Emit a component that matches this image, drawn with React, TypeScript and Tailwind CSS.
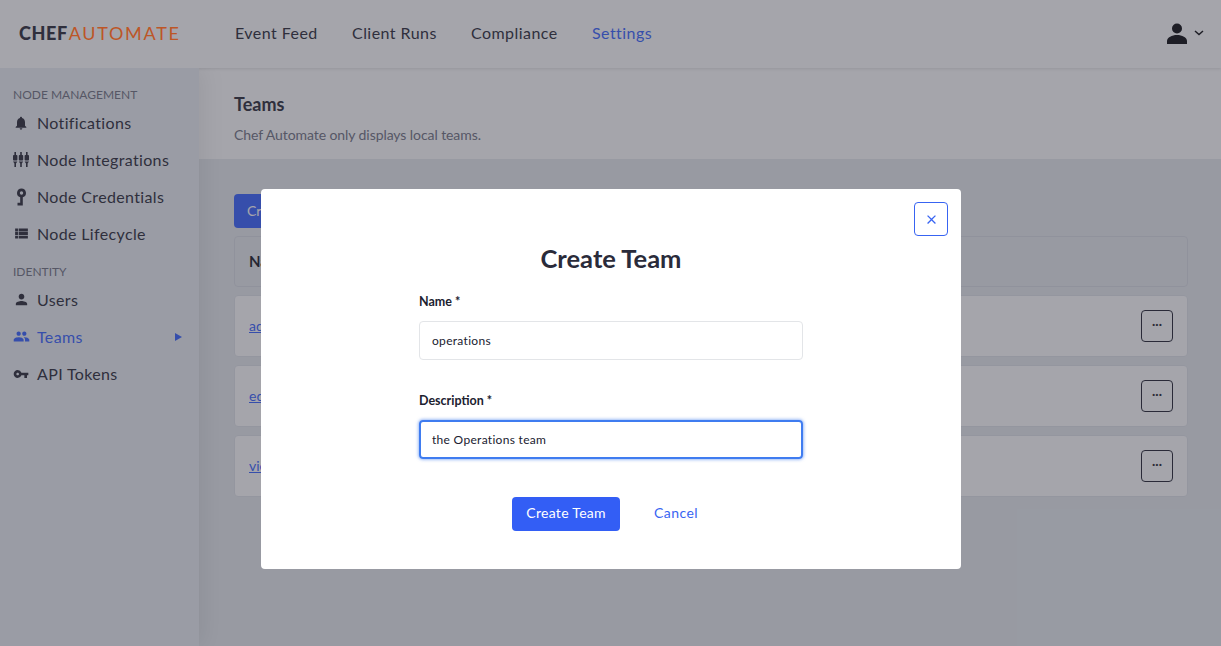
import { MdNotifications, MdViewList, MdPerson, MdPeople, MdVpnKey, MdClose } from "react-icons/md";
import type { ReactNode } from "react";

function IntegrationsIcon() {
  return (
    <svg width="16" height="15" viewBox="0 0 16 15" fill="currentColor">
      {[0, 5.8, 11.6].map((x) => (
        <g key={x}>
          <rect x={x + 1.4} y="0" width="1.6" height="3" />
          <rect x={x} y="3" width="4.400" height="5.500" rx="0.8" />
          <path d={`M${x} 9.500h4.400l-1.400 2v3.500h-1.600v-3.500z`} />
        </g>
      ))}
    </svg>
  );
}

function CredentialIcon() {
  return (
    <svg width="16" height="18" viewBox="0 0 16 18" fill="currentColor">
      <path fillRule="evenodd" d="M8.500 0.500a4.500 4.500 0 0 1 1.300 8.800V17.500H4.500v-2.800H7.200V9.300A4.500 4.500 0 0 1 8.500 0.500zm0 2.800a1.700 1.700 0 1 0 0 3.400 1.700 1.700 0 0 0 0-3.400z" />
    </svg>
  );
}

function NavItem({ icon, label, active }: { icon: ReactNode; label: string; active?: boolean }) {
  return (
    <div className={`flex h-[37px] items-center pl-[13px] pr-[17px] text-base tracking-[0.35px] ${active ? "text-[#2f5cff]" : "text-[#20212f]"}`}>
      <span className="flex w-[24px] shrink-0 items-center">{icon}</span>
      <span className="flex-1">{label}</span>
      {active && <span className="h-0 w-0 border-y-[4px] border-l-[7px] border-y-transparent border-l-[#2f5cff]" />}
    </div>
  );
}

function TeamRow({ name }: { name: string }) {
  return (
    <div className="flex h-[62px] items-center justify-between rounded border border-[#dfe3e8] bg-white pl-[14px] pr-[14px]">
      <a className="text-sm text-[#2f5cff] underline">{name}</a>
      <button className="flex h-[32px] w-[32px] items-center justify-center rounded border border-[#171826] pb-1 text-xs font-bold text-[#171826]">···</button>
    </div>
  );
}

export default function App() {
  return (
    <div className="relative h-[646px] w-[1221px] overflow-hidden bg-[#e7ebef] font-['Lato','Liberation_Sans',sans-serif]">
      <header className="relative flex h-[68px] items-center bg-white pb-[2px] pl-[19px] pr-[17px] shadow-[0_1px_3px_rgba(0,0,0,0.12)]">
        <div className="w-[216px] text-[18px] leading-none text-[#20212f]">
          <span className="font-black tracking-[0.6px]">CHEF</span>
          <span className="relative z-[25] ml-[1px] font-normal tracking-[1.7px] text-[#bd5627]">AUTOMATE</span>
        </div>
        <nav className="flex flex-1 text-base tracking-[0.45px] text-[#20212f]">
          <span className="w-[117px]">Event Feed</span>
          <span className="w-[119px]">Client Runs</span>
          <span className="w-[121px]">Compliance</span>
          <span className="text-[#2f5cff]">Settings</span>
        </nav>
        <div className="flex items-center text-[#000005]">
          <svg width="22" height="21" viewBox="0 0 22 21" fill="currentColor">
            <circle cx="11" cy="5.500" r="5" />
            <path d="M1 21v-3c0-3.500 5-6 10-6s10 2.500 10 6v3z" />
          </svg>
          <svg width="10" height="6" viewBox="0 0 10 6" fill="none" stroke="currentColor" strokeWidth="1.500" className="ml-[6px]">
            <path d="M1 1l4 3.500L9 1" />
          </svg>
        </div>
      </header>

      <div className="flex h-[578px] overflow-hidden">
        <aside className="relative w-[199px] shrink-0 bg-[#ebeff4] pt-[20px] shadow-[4px_0_22px_rgba(0,0,0,0.09)]">
          <div className="pl-[13px] text-xs leading-[14px] text-[#6a6c7c]">NODE MANAGEMENT</div>
          <div className="mt-[2px]">
            <NavItem icon={<MdNotifications size={16} />} label="Notifications" />
            <NavItem icon={<IntegrationsIcon />} label="Node Integrations" />
            <NavItem icon={<CredentialIcon />} label="Node Credentials" />
            <NavItem icon={<MdViewList size={17} />} label="Node Lifecycle" />
          </div>
          <div className="mt-[13px] pl-[13px] text-xs leading-[14px] text-[#6a6c7c]">IDENTITY</div>
          <div className="mt-[2px]">
            <NavItem icon={<MdPerson size={17} />} label="Users" />
            <NavItem active icon={<MdPeople size={17} />} label="Teams" />
            <NavItem icon={<MdVpnKey size={16} />} label="API Tokens" />
          </div>
        </aside>

        <main className="flex-1">
          <div className="h-[91px] bg-white pl-[35px] pt-[25px]">
            <h1 className="text-lg font-bold leading-[22px] text-[#20212f]">Teams</h1>
            <p className="mt-[11px] text-sm leading-[18px] tracking-[-0.08px] text-[#6a6c7c]">Chef Automate only displays local teams.</p>
          </div>
          <div className="pl-[35px] pr-[33px] pt-[35px]">
            <button className="h-[34px] rounded bg-[#2f5cff] px-[13px] text-sm text-white">Create Team</button>
            <div className="mt-[8px] flex h-[51px] items-center rounded border border-[#d8dbe2] pl-[14px] text-[15px] font-bold text-[#0e0f1a]">Name</div>
            <div className="mt-[8px] flex flex-col gap-[8px]">
              <TeamRow name="admins" />
              <TeamRow name="editors" />
              <TeamRow name="viewers" />
            </div>
          </div>
        </main>
      </div>

      <div className="absolute inset-0 z-20 bg-[rgba(63,64,77,0.47)]" />

      <div className="absolute left-[261px] top-[189px] z-30 flex h-[380px] w-[700px] flex-col items-center rounded bg-white pt-[52px] text-[#20212f]">
        <button className="absolute right-[13px] top-[13px] flex h-[34px] w-[34px] items-center justify-center rounded border border-[#3864f2] text-[#3864f2]">
          <MdClose size={15} />
        </button>
        <h2 className="text-[25.5px] font-bold leading-[34px] text-[#2a2b3a]">Create Team</h2>
        <div className="mt-[18px] w-[384px]">
          <label className="block text-[12.5px] font-bold leading-[18px]">Name *</label>
          <div className="mt-[10px] flex h-[39px] items-center rounded border border-[#e3e5e8] pl-[12px] text-xs tracking-[0.3px]">operations</div>
          <label className="mt-[32px] block text-[12.5px] font-bold leading-[18px]">Description *</label>
          <div className="mt-[10px] flex h-[39px] items-center rounded border-2 border-[#3f7cf0] pl-[11px] text-xs tracking-[0.3px] shadow-[0_0_3px_1px_rgba(63,124,240,0.5)]">the Operations team</div>
        </div>
        <div className="mt-[38px] flex items-center pr-[12px]">
          <button className="h-[34px] w-[108px] rounded bg-[#335ef5] pb-[2px] text-sm tracking-[0.3px] text-white">Create Team</button>
          <span className="mb-[2px] ml-[34px] text-sm tracking-[0.4px] text-[#3864f2]">Cancel</span>
        </div>
      </div>
    </div>
  );
}
